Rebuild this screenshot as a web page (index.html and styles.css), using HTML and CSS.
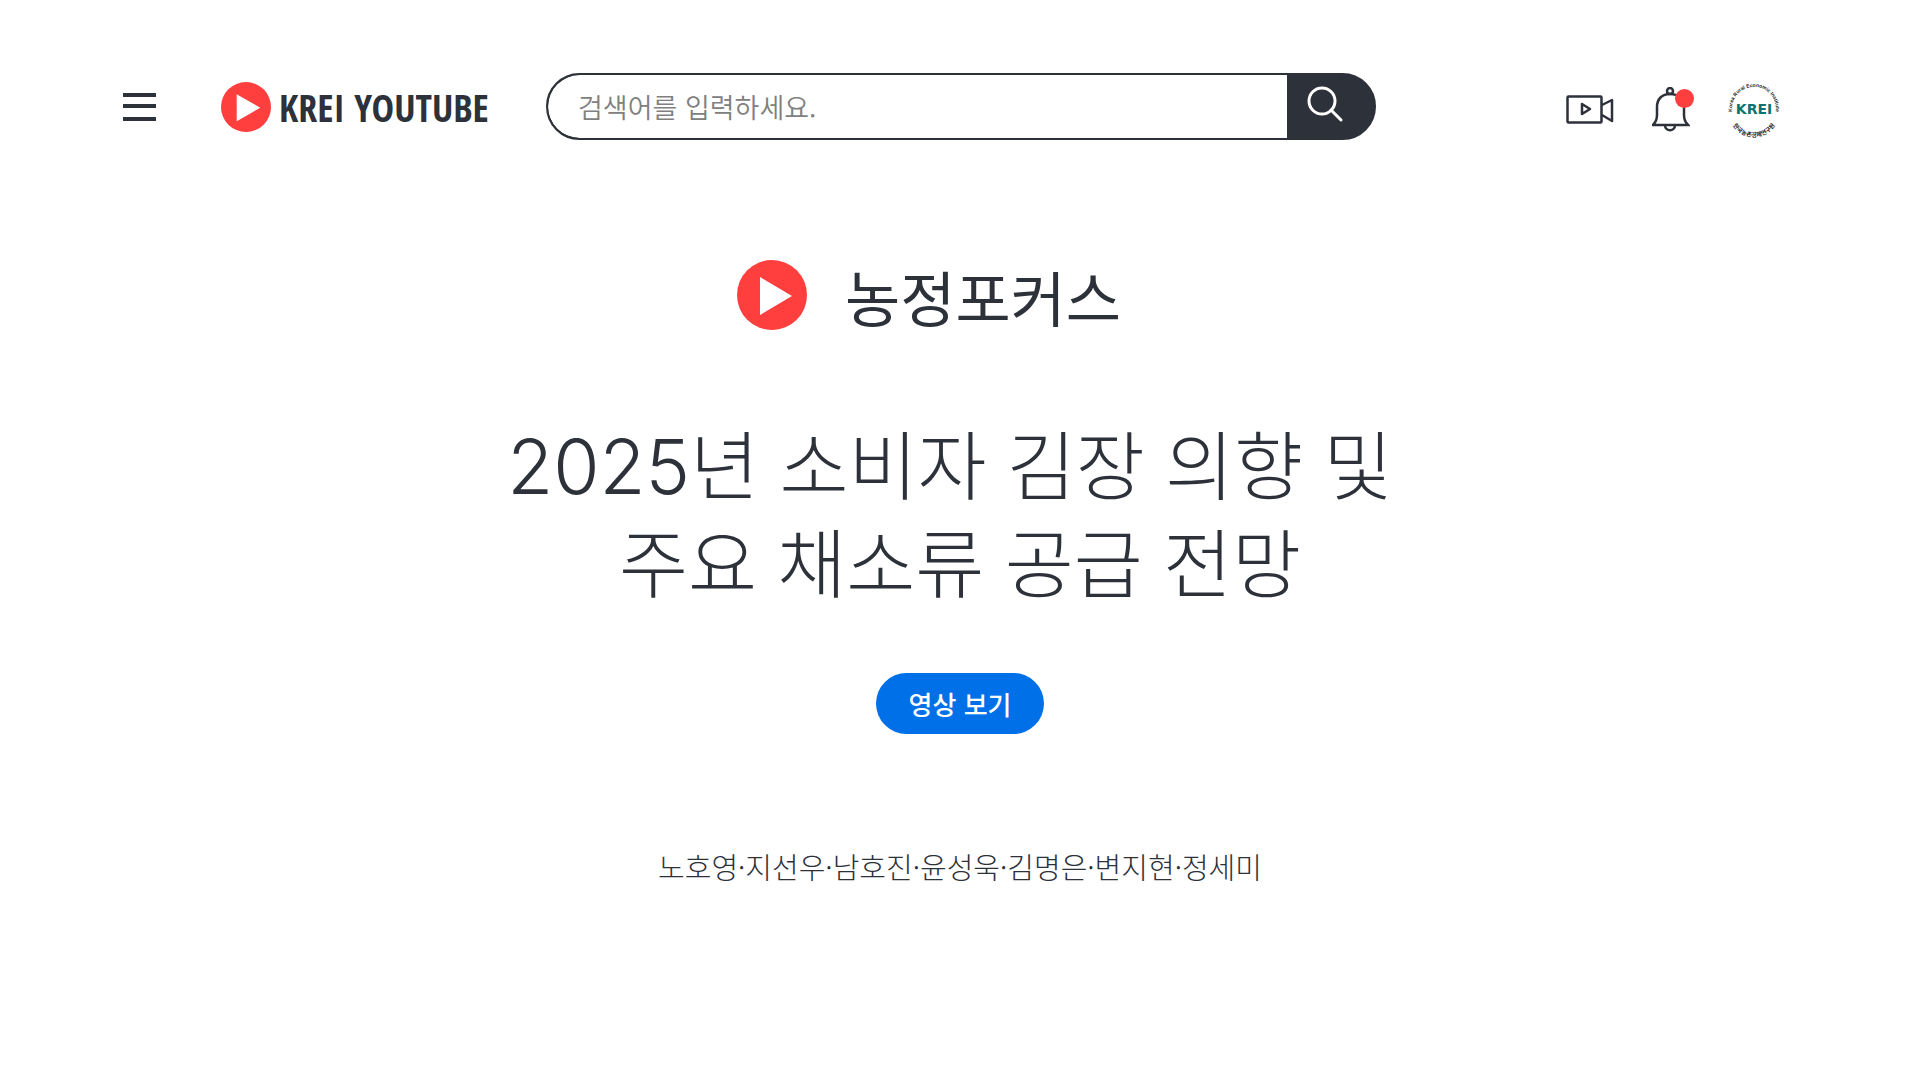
FILE: index.html
```html
<!DOCTYPE html>
<html lang="ko">
<head>
    <meta charset="utf-8">
    <title>KREI YOUTUBE | 농정포커스</title>
    <meta name="viewport" content="width=device-width, initial-scale=1.0">
    <link rel="stylesheet" href="styles.css">
</head>
<body>
    <header class="header">
        <button type="button" class="icon-btn menu-btn" aria-label="메뉴">
            <svg width="33" height="28" viewBox="0 0 33 28"><path d="M0 2h33M0 13h33M0 26h33" stroke="#2d3139" stroke-width="4"/></svg>
        </button>
        <a href="#" class="logo">
            <svg width="50" height="50" viewBox="0 0 70 70"><circle cx="35" cy="35" r="35" fill="#ff3e3e"/><path d="M22 17v38l33-19z" fill="#fff"/></svg>
            <span class="logo-text">KREI YOUTUBE</span>
        </a>
        <form class="search" role="search">
            <input type="search" name="q" placeholder="검색어를 입력하세요." aria-label="검색어">
            <button type="submit" aria-label="검색">
                <svg width="38" height="38" viewBox="0 0 38 38" fill="none" stroke="#fff" stroke-width="3"><circle cx="16" cy="16" r="13"/><path d="M25 25l10 10" stroke-linecap="round"/></svg>
            </button>
        </form>
        <nav class="actions">
            <button type="button" class="icon-btn" aria-label="동영상 만들기">
                <svg width="48" height="29" viewBox="0 0 48 29" fill="none" stroke="#2d3139" stroke-width="2.5" stroke-linejoin="round"><rect x="1.5" y="1.5" width="34" height="26" rx="1"/><path d="M36 10l10-5v21l-10-6M16 9v10l8-5z"/></svg>
            </button>
            <button type="button" class="icon-btn bell-btn" aria-label="알림">
                <svg width="38" height="46" viewBox="0 0 38 46" fill="none" stroke="#2d3139" stroke-width="2.5"><path d="M1 38c3-3 4-6 4-10V20C5 12 10 7 18 7s14 5 14 13v8c0 4 1 7 4 10zM13 38c0 7 10 7 10 0"/><circle cx="18" cy="4" r="3"/></svg>
                <span class="dot"></span>
            </button>
            <a href="#" class="avatar" aria-label="KREI">
                <svg width="52" height="52" viewBox="0 0 52 52">
                    <path id="arcTop" d="M6 34A22 22 0 1 1 46 34" fill="none"/>
                    <path id="arcBottom" d="M1 28A25 25 0 0 0 51 28" fill="none"/>
                    <text class="ring-text" text-anchor="middle"><textPath href="#arcTop" startOffset="50%">Korea Rural Economic Institute</textPath></text>
                    <text class="ring-text ring-korean" text-anchor="middle"><textPath href="#arcBottom" startOffset="50%">한국농촌경제연구원</textPath></text>
                    <text class="ring-name" x="26" y="30" text-anchor="middle">KREI</text>
                </svg>
            </a>
        </nav>
    </header>

    <main class="main">
        <div class="focus">
            <svg width="70" height="70" viewBox="0 0 70 70"><circle cx="35" cy="35" r="35" fill="#ff3e3e"/><path d="M23 17v38l32-19z" fill="#fff"/></svg>
            <h2>농정포커스</h2>
        </div>
        <h1><span class="year">2025</span>년 소비자 김장 의향 및&nbsp;<br>주요 채소류 공급 전망</h1>
        <a href="#" class="watch-btn">영상 보기</a>
        <p class="authors">노호영·지선우·남호진·윤성욱·김명은·변지현·정세미</p>
    </main>
</body>
</html>
```
FILE: styles.css
```css
* {
    box-sizing: border-box;
}

body {
    margin: 0;
    font-family: 'Noto Sans CJK KR', sans-serif;
    color: #2d3139;
    background-color: #ffffff;
}

button {
    padding: 0;
    border: none;
    background: none;
    cursor: pointer;
}

svg {
    display: block;
}

/* header */
.header {
    display: flex;
    align-items: center;
    padding: 73px 140px 0 123px;
}

.logo {
    display: flex;
    align-items: center;
    gap: 8px;
    margin-left: 65px;
    color: #2d3139;
    text-decoration: none;
}

.logo-text {
    width: 208px;
    font-family: 'Open Sans Condensed', 'Roboto Condensed', sans-serif;
    font-size: 38px;
    font-weight: 700;
    line-height: 50px;
    white-space: nowrap;
}

.search {
    display: flex;
    flex: 0 1 830px;
    height: 67px;
    margin-left: 59px;
    border: 2px solid #2d3139;
    border-radius: 34px;
    background-color: #2d3139;
    overflow: hidden;
}

.search input {
    flex: 1;
    min-width: 0;
    padding: 0 30px;
    border: none;
    border-radius: 32px 0 0 32px;
    outline: none;
    background-color: #ffffff;
    font-family: inherit;
    font-size: 27px;
    font-weight: 350;
    color: #2d3139;
}

.search input::placeholder {
    color: #808080;
}

.search button {
    width: 87px;
    padding: 0 0 6px 19px;
}

.actions {
    display: flex;
    align-items: center;
    gap: 38px;
    margin-left: auto;
    padding-top: 6px;
}

.bell-btn {
    position: relative;
}

.dot {
    position: absolute;
    top: 2px;
    right: -4px;
    width: 19px;
    height: 19px;
    border-radius: 50%;
    background-color: #ff3e3e;
}

.avatar svg {
    overflow: visible;
}

.ring-text {
    font-family: 'Liberation Sans', sans-serif;
    font-size: 5px;
    font-weight: 700;
    fill: #222222;
}

.ring-korean {
    font-family: 'Noto Sans CJK KR', sans-serif;
    font-size: 6px;
}

.ring-name {
    font-family: 'DejaVu Sans', sans-serif;
    font-size: 14px;
    font-weight: 700;
    fill: #0a7272;
}

/* main */
.main {
    display: flex;
    flex-direction: column;
    align-items: center;
    padding: 120px 20px 60px;
    text-align: center;
}

.focus {
    display: flex;
    align-items: center;
    gap: 38px;
    height: 70px;
    padding-right: 62px;
}

.focus h2 {
    margin: 0;
    font-size: 60px;
    font-weight: 400;
}

h1 {
    margin: 87px 0 61px;
    font-family: 'Lato', 'Noto Sans CJK KR', sans-serif;
    font-size: 75px;
    font-weight: 300;
    line-height: 97px;
}

.year {
    font-family: 'Inter', sans-serif;
}

.watch-btn {
    padding: 0 33px;
    border-radius: 31px;
    background-color: #0070e8;
    color: #ffffff;
    font-size: 26px;
    font-weight: 500;
    line-height: 61px;
    text-decoration: none;
}

.authors {
    margin: 112px 0 0;
    font-size: 29px;
    font-weight: 300;
    line-height: 40px;
}
```
